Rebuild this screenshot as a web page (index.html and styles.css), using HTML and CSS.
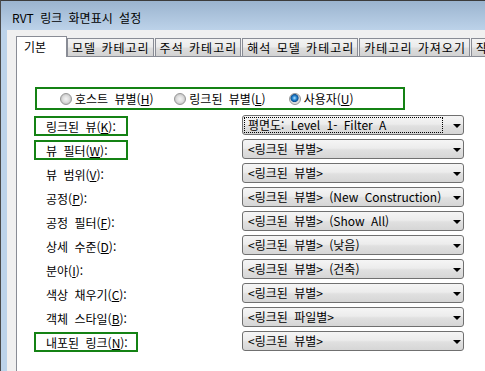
FILE: index.html
```html
<!DOCTYPE html>
<html lang="ko">
<head>
    <meta charset="UTF-8">
    <title>RVT 링크 화면표시 설정</title>
    <link rel="stylesheet" href="styles.css">
</head>
<body>
    <div class="window">
        <div class="titlebar">RVT 링크 화면표시 설정</div>
        <div class="frame">
            <div class="client">
                <div class="tabs">
                    <div class="tab active">기본</div>
                    <div class="tab">모델 카테고리</div>
                    <div class="tab">주석 카테고리</div>
                    <div class="tab">해석 모델 카테고리</div>
                    <div class="tab">카테고리 가져오기</div>
                    <div class="tab">작업세트</div>
                </div>
                <div class="panel">
                    <div class="radio-group">
                        <div class="option"><span class="radio"></span>호스트 뷰별(<u>H</u>)</div>
                        <div class="option"><span class="radio"></span>링크된 뷰별(<u>L</u>)</div>
                        <div class="option"><span class="radio checked"></span>사용자(<u>U</u>)</div>
                    </div>
                    <div class="rows">
                        <div class="row">
                            <span class="label mark">링크된 뷰(<u>K</u>):</span>
                            <div class="combo"><span class="value focus">평면도: Level 1- Filter A</span><span class="arrow"></span></div>
                        </div>
                        <div class="row">
                            <span class="label mark">뷰 필터(<u>W</u>):</span>
                            <div class="combo"><span class="value">&lt;링크된 뷰별&gt;</span><span class="arrow"></span></div>
                        </div>
                        <div class="row">
                            <span class="label">뷰 범위(<u>V</u>):</span>
                            <div class="combo"><span class="value">&lt;링크된 뷰별&gt;</span><span class="arrow"></span></div>
                        </div>
                        <div class="row">
                            <span class="label">공정(<u>P</u>):</span>
                            <div class="combo"><span class="value">&lt;링크된 뷰별&gt; (New Construction)</span><span class="arrow"></span></div>
                        </div>
                        <div class="row">
                            <span class="label">공정 필터(<u>F</u>):</span>
                            <div class="combo"><span class="value">&lt;링크된 뷰별&gt; (Show All)</span><span class="arrow"></span></div>
                        </div>
                        <div class="row">
                            <span class="label">상세 수준(<u>D</u>):</span>
                            <div class="combo"><span class="value">&lt;링크된 뷰별&gt; (낮음)</span><span class="arrow"></span></div>
                        </div>
                        <div class="row">
                            <span class="label">분야(<u>I</u>):</span>
                            <div class="combo"><span class="value">&lt;링크된 뷰별&gt; (건축)</span><span class="arrow"></span></div>
                        </div>
                        <div class="row">
                            <span class="label">색상 채우기(<u>C</u>):</span>
                            <div class="combo"><span class="value">&lt;링크된 뷰별&gt;</span><span class="arrow"></span></div>
                        </div>
                        <div class="row">
                            <span class="label">객체 스타일(<u>B</u>):</span>
                            <div class="combo"><span class="value">&lt;링크된 파일별&gt;</span><span class="arrow"></span></div>
                        </div>
                        <div class="row">
                            <span class="label mark mark-wide">내포된 링크(<u>N</u>):</span>
                            <div class="combo"><span class="value">&lt;링크된 뷰별&gt;</span><span class="arrow"></span></div>
                        </div>
                    </div>
                </div>
            </div>
        </div>
    </div>
</body>
</html>
```

FILE: styles.css
```css
body {
    margin: 0;
    font-family: "Noto Sans CJK KR", "Noto Sans", sans-serif;
    font-size: 12px;
    line-height: 14px;
    word-spacing: 3px;
    color: #000;
}
u {
    text-underline-offset: 1px;
}
.window {
    width: 485px;
    height: 371px;
    overflow: hidden;
    box-sizing: border-box;
    border-left: 1px solid #4a4a4a;
    display: flex;
    flex-direction: column;
}
.titlebar {
    height: 30px;
    box-sizing: border-box;
    border-top: 1px solid #3c3c3c;
    background: linear-gradient(#9bb4cf, #bcd2e9);
    padding: 4px 0 0 11px;
    display: flex;
    align-items: center;
    white-space: nowrap;
}
.frame {
    flex: 1;
    display: flex;
    padding-left: 6px;
    background: #bcd3ea;
}
.client {
    flex: 1;
    display: flex;
    flex-direction: column;
    background: #f0f0f0;
    padding-left: 9px;
    min-width: 0;
}
.tabs {
    margin-top: 6px;
    height: 20px;
    display: flex;
    align-items: flex-end;
    gap: 1px;
    white-space: nowrap;
}
.tab {
    height: 18px;
    box-sizing: border-box;
    border: 1px solid #898c95;
    border-bottom: none;
    background: linear-gradient(#f3f3f3, #ebebeb 45%, #dddddd 55%, #d2d2d2);
    padding: 1px 3px 0 4px;
    letter-spacing: 1px;
    word-spacing: 1px;
    display: flex;
    align-items: center;
    flex-shrink: 0;
}
.tab.active {
    height: 21px;
    width: 51px;
    margin-bottom: -1px;
    margin-right: -1px;
    padding: 0 0 0 7px;
    letter-spacing: 0;
    background: #fff;
    position: relative;
    z-index: 1;
}
.panel {
    flex: 1;
    background: #fff;
    border-top: 1px solid #898c95;
    border-left: 1px solid #898c95;
    padding-top: 30px;
}
.radio-group {
    margin-left: 18px;
    width: 370px;
    height: 23px;
    box-sizing: border-box;
    border: 2px solid #148214;
    padding: 1px 0 0 23px;
    display: flex;
    align-items: center;
}
.option {
    width: 133px;
    display: flex;
    align-items: center;
    white-space: nowrap;
}
.radio {
    width: 12px;
    height: 12px;
    box-sizing: border-box;
    border-radius: 50%;
    border: 1px solid #969696;
    background: radial-gradient(circle at 50% 50%, #f4f4f4 0, #dedede 45%, #c8c8c8 70%, #eeeeee 100%);
    margin-right: 3px;
}
.radio.checked {
    background: radial-gradient(circle at 45% 40%, #b7e2ff 0, #2a8ad4 25%, #0b4f94 45%, #d8d8d8 55%, #eeeeee 100%);
}
.rows {
    margin-top: 3px;
}
.row {
    height: 24px;
    display: grid;
    grid-template-columns: 208px 222px;
    align-items: center;
    padding-left: 17px;
}
.label {
    justify-self: start;
    height: 20px;
    box-sizing: border-box;
    border: 2px solid transparent;
    padding: 1px 0 0 10px;
    display: flex;
    align-items: center;
    white-space: nowrap;
    margin-top: 2px;
}
.label.mark {
    width: 94px;
    border-color: #148214;
}
.label.mark-wide {
    width: 104px;
}
.combo {
    height: 20px;
    box-sizing: border-box;
    border: 1px solid #707070;
    border-radius: 3px;
    background: linear-gradient(#f5f5f5, #ececec 45%, #e0e0e0 55%, #d6d6d6);
    padding-left: 1px;
    display: flex;
    align-items: center;
    white-space: nowrap;
}
.value {
    flex: 1;
    height: 16px;
    box-sizing: border-box;
    border: 1px solid transparent;
    padding: 0 0 0 3px;
    display: flex;
    align-items: center;
    overflow: hidden;
}
.value.focus {
    border: 1px dotted #000;
}
.arrow {
    width: 0;
    height: 0;
    border-left: 4px solid transparent;
    border-right: 4px solid transparent;
    border-top: 4px solid #000;
    margin: 1px 2px 0 10px;
}
```
